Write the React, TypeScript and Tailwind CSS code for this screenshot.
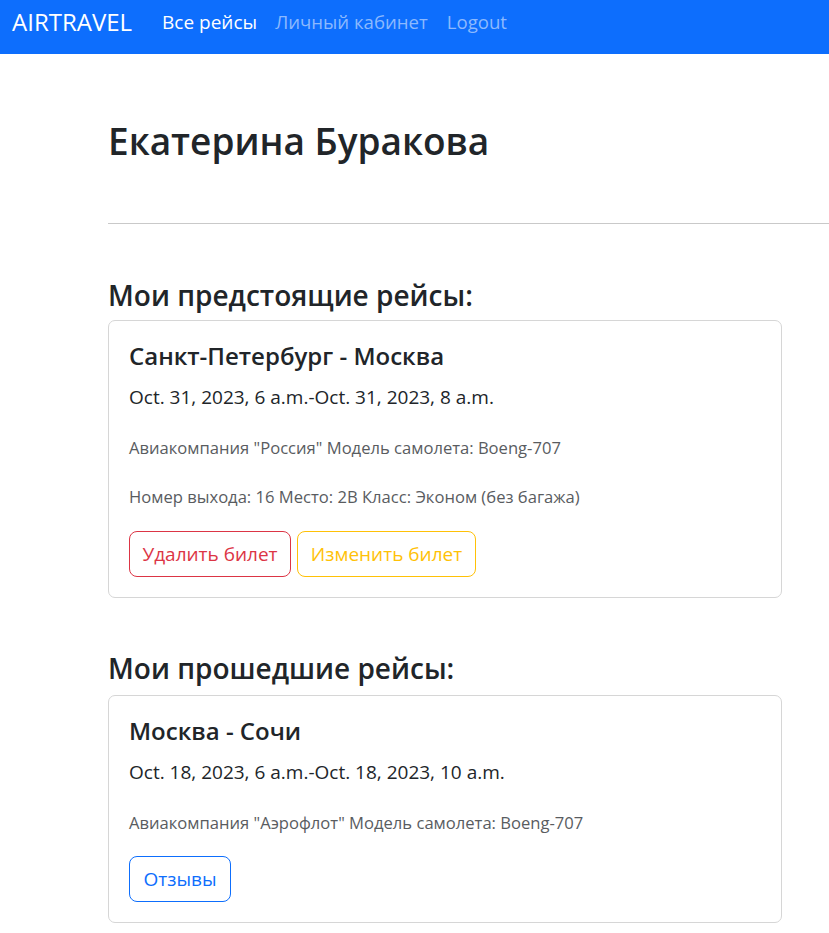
export default function App() {
  return (
    <div className="min-h-[933px] bg-white text-[#212529] font-['Open_Sans',sans-serif]">
      {/* Navbar */}
      <nav className="h-[54px] bg-[#0d6efd] flex items-start pt-[7px] pl-[12px]">
        <a className="text-[24px] leading-[30px] text-white mr-[20px]">AIRTRAVEL</a>
        <div className="flex">
          <a className="pl-[10px] pr-[9px] text-[19px] leading-[30px] text-white">Все рейсы</a>
          <a className="px-[9px] text-[18.6px] leading-[30px] text-[#8cb9fe]">Личный кабинет</a>
          <a className="px-[10px] text-[18.6px] leading-[30px] text-[#8cb9fe]">Logout</a>
        </div>
      </nav>

      <main className="pl-[108px]">
        <h1 className="mt-[62px] text-[37px] leading-[50px] font-semibold">Екатерина Буракова</h1>
        <hr className="mt-[57px] border-0 border-t border-[#c9c9c9]" />

        <h4 className="mt-[54px] text-[28px] leading-[34px] font-semibold">Мои предстоящие рейсы:</h4>
        <div className="mt-[8px] w-[674px] rounded-[7px] border border-[#d6d6d6] p-[20px]">
          <h5 className="text-[24px] leading-[30px] font-semibold">Санкт-Петербург - Москва</h5>
          <p className="mt-[11px] text-[19px] leading-[30px]">Oct. 31, 2023, 6 a.m.-Oct. 31, 2023, 8 a.m.</p>
          <p className="mt-[23px] text-[16.6px] leading-[26px] text-[#595c5f]">
            Авиакомпания "Россия" Модель самолета: Boeng-707
          </p>
          <p className="mt-[23px] text-[16.6px] leading-[26px] text-[#595c5f]">
            Номер выхода: 16 Место: 2B Класс: Эконом (без багажа)
          </p>
          <div className="mt-[21px] flex gap-[6px]">
            <button className="h-[46px] w-[162px] rounded-[8px] border border-[#dc3545] text-[19px] text-[#dc3545]">
              Удалить билет
            </button>
            <button className="h-[46px] w-[179px] rounded-[8px] border border-[#ffc107] text-[19px] text-[#ffc107]">
              Изменить билет
            </button>
          </div>
        </div>

        <h4 className="mt-[53px] text-[28px] leading-[34px] font-semibold">Мои прошедшие рейсы:</h4>
        <div className="mt-[10px] w-[674px] rounded-[7px] border border-[#d6d6d6] p-[20px]">
          <h5 className="text-[24px] leading-[30px] font-semibold">Москва - Сочи</h5>
          <p className="mt-[11px] text-[19px] leading-[30px]">Oct. 18, 2023, 6 a.m.-Oct. 18, 2023, 10 a.m.</p>
          <p className="mt-[23px] text-[16.6px] leading-[26px] text-[#595c5f]">
            Авиакомпания "Аэрофлот" Модель самолета: Boeng-707
          </p>
          <div className="mt-[20px] flex">
            <button className="h-[46px] w-[102px] rounded-[8px] border border-[#0d6efd] text-[19px] text-[#0d6efd]">
              Отзывы
            </button>
          </div>
        </div>
      </main>
    </div>
  );
}
